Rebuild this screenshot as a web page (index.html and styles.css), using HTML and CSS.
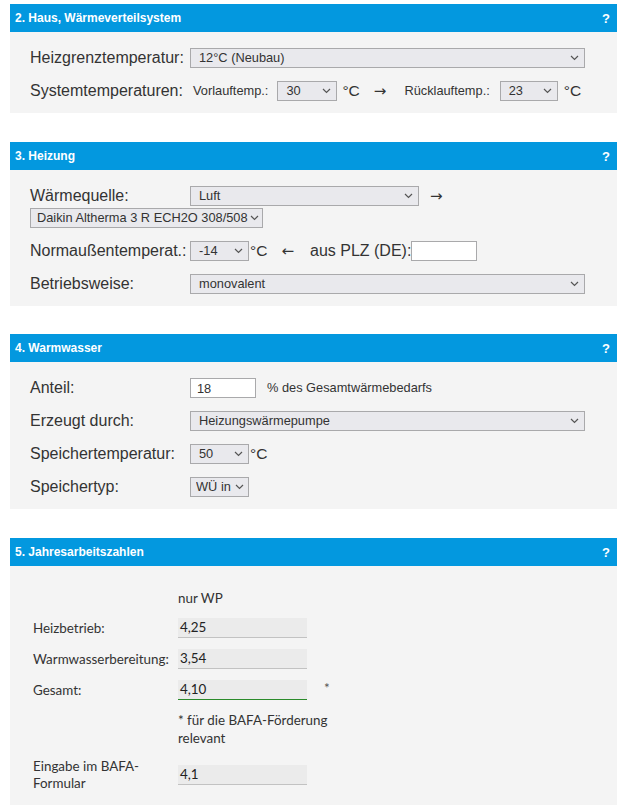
FILE: index.html
```html
<!DOCTYPE html>
<html lang="de">
<head>
<meta charset="utf-8">
<title>Wärmepumpen-Rechner</title>
<link rel="stylesheet" href="styles.css">
</head>
<body>
<div class="page">

  <section class="panel">
    <header class="panel-head"><span>2. Haus, Wärmeverteilsystem</span><span class="help">?</span></header>
    <div class="panel-body">
      <div class="row">
        <label class="lbl">Heizgrenztemperatur:</label>
        <select class="sel sel-wide"><option>12°C (Neubau)</option></select>
      </div>
      <div class="row">
        <span class="lbl">Systemtemperaturen:</span>
        <span class="sub sub-vl">Vorlauftemp.:</span>
        <select class="sel sel-xs sel-vl"><option>30</option></select>
        <span class="unit unit-gap">°C</span>
        <span class="arrow arrow-r">→</span>
        <span class="sub">Rücklauftemp.:</span>
        <select class="sel sel-xs sel-rl"><option>23</option></select>
        <span class="unit unit-gap2">°C</span>
      </div>
    </div>
  </section>

  <section class="panel">
    <header class="panel-head"><span>3. Heizung</span><span class="help">?</span></header>
    <div class="panel-body">
      <div class="row row-wrap">
        <label class="lbl">Wärmequelle:</label>
        <select class="sel sel-mid"><option>Luft</option></select>
        <span class="arrow arrow-src">→</span>
        <select class="sel sel-model"><option>Daikin Altherma 3 R ECH2O 308/508</option></select>
      </div>
      <div class="row">
        <label class="lbl">Normaußentemperat.:</label>
        <select class="sel sel-xs"><option>-14</option></select>
        <span class="unit unit-tight">°C</span>
        <span class="arrow arrow-l">←</span>
        <span class="lbl-inline">aus PLZ (DE):</span>
        <input class="txt" type="text" value="">
      </div>
      <div class="row">
        <label class="lbl">Betriebsweise:</label>
        <select class="sel sel-wide"><option>monovalent</option></select>
      </div>
    </div>
  </section>

  <section class="panel">
    <header class="panel-head"><span>4. Warmwasser</span><span class="help">?</span></header>
    <div class="panel-body">
      <div class="row">
        <label class="lbl">Anteil:</label>
        <input class="txt" type="text" value="18">
        <span class="sub sub-after">% des Gesamtwärmebedarfs</span>
      </div>
      <div class="row">
        <label class="lbl">Erzeugt durch:</label>
        <select class="sel sel-wide"><option>Heizungswärmepumpe</option></select>
      </div>
      <div class="row">
        <label class="lbl">Speichertemperatur:</label>
        <select class="sel sel-xs"><option>50</option></select>
        <span class="unit unit-tight">°C</span>
      </div>
      <div class="row">
        <label class="lbl">Speichertyp:</label>
        <select class="sel sel-xs sel-type"><option>WÜ in</option></select>
      </div>
    </div>
  </section>

  <section class="panel">
    <header class="panel-head"><span>5. Jahresarbeitszahlen</span><span class="help">?</span></header>
    <div class="panel-body jaz">
      <div class="jaz-grid">
        <span></span>
        <span class="jaz-colhead">nur WP</span>
        <span></span>

        <span class="jaz-lbl">Heizbetrieb:</span>
        <output class="jaz-val">4,25</output>
        <span></span>

        <span class="jaz-lbl">Warmwasserbereitung:</span>
        <output class="jaz-val">3,54</output>
        <span></span>

        <span class="jaz-lbl">Gesamt:</span>
        <output class="jaz-val jaz-total">4,10</output>
        <span class="jaz-star">*</span>

        <span></span>
        <span class="jaz-note">* für die BAFA-Förderung relevant</span>

        <span class="jaz-lbl jaz-lbl-wrap">Eingabe im BAFA-Formular</span>
        <output class="jaz-val">4,1</output>
        <span></span>
      </div>
    </div>
  </section>

</div>
</body>
</html>
```

FILE: styles.css
```css
* {
  box-sizing: border-box;
}

html, body {
  margin: 0;
  background: #ffffff;
}

body {
  font-family: "Liberation Sans", Arial, sans-serif;
  color: #333333;
}

.page {
  padding: 4px 8px 0 10px;
}

/* ---------- panels ---------- */

.panel {
  margin-bottom: 29px;
}

.panel:nth-child(2) {
  margin-bottom: 28px;
}

.panel-head {
  display: flex;
  justify-content: space-between;
  align-items: center;
  height: 28px;
  padding: 0 7px 0 5px;
  background: #0398df;
  color: #ffffff;
  font-size: 12px;
  font-weight: bold;
}

.help {
  font-size: 13px;
}

.panel-body {
  display: flex;
  flex-direction: column;
  gap: 13px;
  padding: 16px 32px 12px 20px;
  background: #f4f4f4;
}

/* ---------- form rows ---------- */

.row {
  display: flex;
  align-items: center;
  min-height: 20px;
  line-height: 20px;
}

.row-wrap {
  flex-wrap: wrap;
  row-gap: 2px;
}

.lbl {
  flex: none;
  width: 160px;
  font-size: 16px;
  color: #333333;
  white-space: nowrap;
}

.lbl-inline {
  font-size: 16px;
  color: #333333;
  white-space: nowrap;
}

.sub {
  font-size: 12.8px;
  color: #333333;
  white-space: nowrap;
}

.sub-vl {
  margin-left: 3px;
  margin-right: 9px;
}

.sub-after {
  margin-left: 11px;
}

.unit {
  font-size: 15.5px;
  color: #333333;
}

.unit-gap {
  margin-left: 5px;
}

.unit-gap2 {
  margin-left: 6px;
}

.unit-tight {
  margin-left: 1px;
}

.arrow {
  font-family: "DejaVu Sans", sans-serif;
  font-size: 15px;
  color: #333333;
}

.arrow-r {
  margin: 0 18px 0 14px;
}

.arrow-src {
  margin-left: 11px;
}

.arrow-l {
  margin: 0 16px 0 14px;
}

/* ---------- controls ---------- */

.sel {
  appearance: none;
  -webkit-appearance: none;
  flex: none;
  height: 20px;
  margin: 0;
  padding: 0 18px 0 8px;
  border: 1px solid #a9a9ab;
  border-radius: 0;
  background: #e9e9ed url("data:image/svg+xml,%3Csvg xmlns='http://www.w3.org/2000/svg' width='9' height='6' viewBox='0 0 9 6'%3E%3Cpath d='M1 1l3.5 3.5L8 1' fill='none' stroke='%23555' stroke-width='1.2'/%3E%3C/svg%3E") no-repeat right 5px center;
  font-family: "Liberation Sans", Arial, sans-serif;
  font-size: 12.8px;
  color: #333333;
  line-height: 18px;
}

.sel-wide {
  width: 395px;
}

.sel-mid {
  width: 229px;
}

.sel-model {
  width: 233px;
  padding: 0 14px 0 6px;
  background-position: right 3px center;
}

.sel-xs {
  width: 59px;
}

.sel-vl {
  width: 60px;
}

.sel-rl {
  margin-left: 10px;
  width: 58px;
}

.sel-type {
  padding: 0 12px 0 5px;
  background-position: right 4px center;
}

.txt {
  flex: none;
  width: 66px;
  height: 20px;
  margin: 0;
  padding: 0 6px;
  border: 1px solid #a9a9ab;
  border-radius: 0;
  background: #ffffff;
  font-family: "Liberation Sans", Arial, sans-serif;
  font-size: 12.8px;
  color: #333333;
}

/* ---------- Jahresarbeitszahlen ---------- */

.jaz {
  padding: 24px 20px 30px 23px;
}

.jaz-grid {
  display: grid;
  grid-template-columns: 140px 129px auto;
  column-gap: 5px;
  row-gap: 11px;
  align-items: center;
  font-family: Lato, "Noto Sans", sans-serif;
  font-size: 13.4px;
  color: #333333;
}

.jaz-colhead {
  line-height: 17px;
}

.jaz-lbl {
  line-height: 17px;
  white-space: nowrap;
}

.jaz-lbl-wrap {
  white-space: normal;
  max-width: 118px;
}

.jaz-val {
  display: block;
  height: 20px;
  padding: 0 2px;
  line-height: 19px;
  background: #ebebeb;
  border-bottom: 1px solid #c2c2c2;
  color: #222222;
}

.jaz-total {
  border-bottom-color: #2a8a2a;
}

.jaz-star {
  padding-left: 12px;
  color: #555555;
  align-self: start;
  line-height: 16px;
}

.jaz-note {
  grid-column: 2 / 4;
  width: 160px;
  line-height: 18px;
}
```
